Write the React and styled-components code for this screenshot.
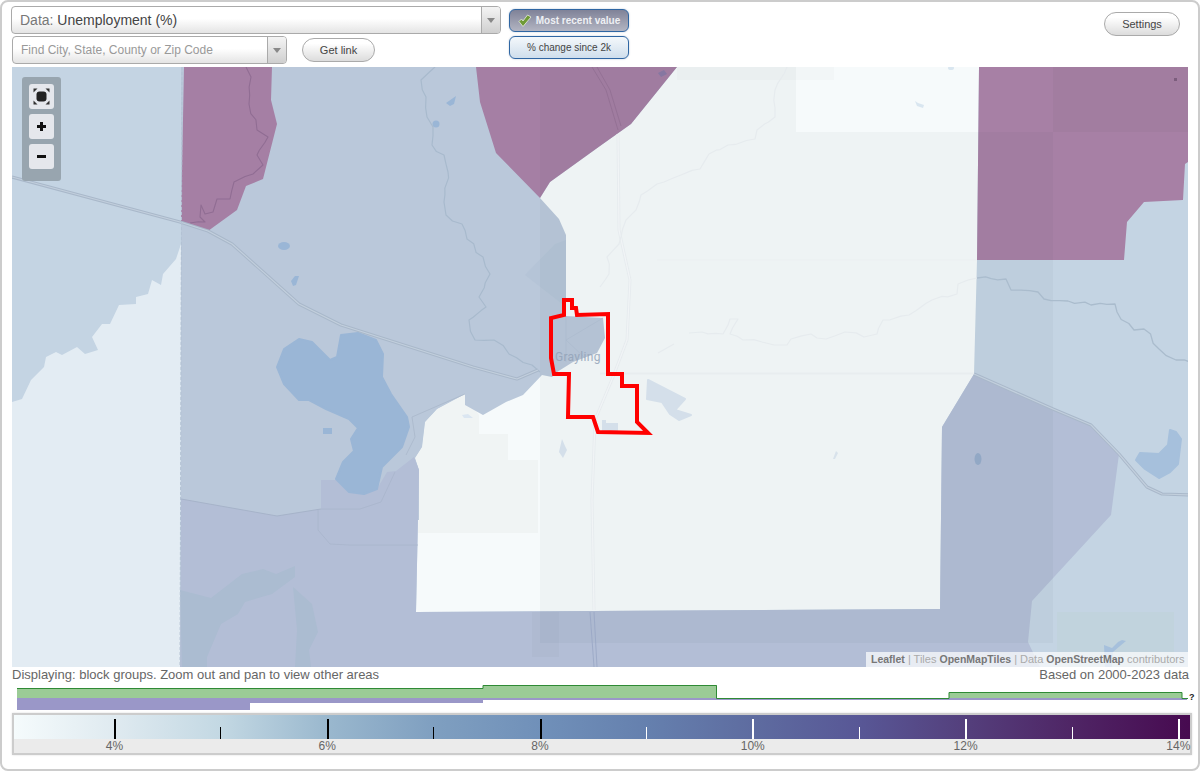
import React from 'react';
import styled, { createGlobalStyle } from 'styled-components';

const GlobalStyle = createGlobalStyle`
  html, body {
    margin: 0;
    padding: 0;
    background: #fff;
    font-family: "Liberation Sans", Arial, sans-serif;
  }
`;

const Page = styled.div`
  box-sizing: border-box;
  width: 1200px;
  height: 771px;
  overflow: hidden;
  background: #fff;
  border: 2px solid #ccc;
  border-radius: 8px;
  padding: 4px 9px 0 9px;
`;

const Toolbar = styled.div`
  display: flex;
  align-items: flex-start;
  height: 61px;
`;

const LeftStack = styled.div`
  display: flex;
  flex-direction: column;
  gap: 2px;
  width: 490px;
`;

const SelectBox = styled.div`
  box-sizing: border-box;
  display: flex;
  align-items: center;
  height: 28px;
  width: ${(p) => p.$width}px;
  margin-left: ${(p) => p.$indent || 0}px;
  border: 1px solid #aaa;
  border-radius: 4px;
  background: linear-gradient(#fff 45%, #e4e4e4);
`;

const SelectText = styled.div`
  flex: 1;
  padding-left: 8px;
  font-size: ${(p) => (p.$small ? 12 : 14)}px;
  color: ${(p) => (p.$small ? '#999' : '#777')};
`;

const SelectValue = styled.span`
  color: #444;
`;

const SelectArrow = styled.div`
  box-sizing: border-box;
  display: flex;
  align-items: center;
  justify-content: center;
  width: 19px;
  height: 100%;
  border-left: 1px solid #aaa;
  background: linear-gradient(#f4f4f4, #cfcfcf);
  border-radius: 0 3px 3px 0;
  &::after {
    content: '';
    border-left: 4px solid transparent;
    border-right: 4px solid transparent;
    border-top: 5px solid #888;
  }
`;

const FindRow = styled.div`
  display: flex;
  align-items: center;
  gap: 15px;
  width: 500px;
`;

const PillButton = styled.button`
  box-sizing: border-box;
  width: ${(p) => p.$width}px;
  height: 24px;
  padding: 0;
  border: 1px solid #aaa;
  border-radius: 12px;
  background: linear-gradient(#fff 20%, #dcdcdc);
  color: #444;
  font-family: inherit;
  font-size: 11px;
`;

const ToggleStack = styled.div`
  display: flex;
  flex-direction: column;
  gap: 4px;
  margin: 3px 0 0 8px;
`;

const Toggle = styled.div`
  box-sizing: border-box;
  display: flex;
  align-items: center;
  justify-content: center;
  gap: 4px;
  width: 120px;
  height: 23px;
  border: 1px solid #2f66a3;
  border-radius: 6px;
  box-shadow: 0 0 2px #b8c4d2;
  font-size: 10px;
  font-weight: ${(p) => (p.$active ? 700 : 400)};
  color: ${(p) => (p.$active ? '#eef0f4' : '#444')};
  background: ${(p) =>
    p.$active
      ? 'linear-gradient(#7f8298, #b3b5c2)'
      : 'linear-gradient(#f4f8fb, #cfdeec)'};
`;

const SettingsSlot = styled.div`
  margin-left: auto;
  margin-top: 6px;
  margin-right: 9px;
`;

const MapFrame = styled.div`
  position: relative;
  width: 1176px;
  height: 600px;
  margin-left: 1px;
  overflow: hidden;
  background: #c3d3e3;
`;

const MapDrawing = styled.svg`
  display: block;
  width: 1176px;
  height: 600px;
`;

const ZoomPanel = styled.div`
  position: absolute;
  top: 10px;
  left: 10px;
  display: flex;
  flex-direction: column;
  gap: 5px;
  box-sizing: border-box;
  width: 39px;
  height: 104px;
  padding: 7px;
  border-radius: 3px;
  background: #98a5af;
`;

const ZoomButton = styled.div`
  display: flex;
  align-items: center;
  justify-content: center;
  width: 25px;
  height: 25px;
  border-radius: 3px;
  background: #e5e7ec;
`;

const Attribution = styled.div`
  position: absolute;
  right: 0;
  bottom: 0;
  box-sizing: border-box;
  width: 322px;
  height: 15px;
  padding-left: 5px;
  background: rgba(255, 255, 255, 0.7);
  color: #aaa;
  font-size: 11px;
  line-height: 15px;
  white-space: nowrap;
`;

const AttrLink = styled.span`
  color: #777;
  font-size: 10.5px;
  font-weight: 700;
`;

const InfoRow = styled.div`
  display: flex;
  justify-content: space-between;
  width: 1177px;
  margin-left: 1px;
  height: 16px;
  font-size: 13px;
  line-height: 15px;
  color: #666;
`;

const Histogram = styled.svg`
  display: block;
  width: 1186px;
  height: 30px;
  margin: 0 0 0 1px;
`;

const Legend = styled.div`
  box-sizing: border-box;
  width: 1180px;
  height: 42px;
  margin-left: 1px;
  border: 2px solid #ccc;
  box-shadow: 0 0 2px #ddd;
  background: #ebebeb;
`;

const LegendBar = styled.div`
  box-sizing: border-box;
  display: grid;
  grid-template-columns: repeat(11, 106.4px);
  align-items: end;
  height: 24px;
  padding-left: 100px;
  background: linear-gradient(
    to right,
    #f5fbfc 0%,
    #dfeaf0 8.6%,
    #c3d8e3 17.6%,
    #9ab8ce 26.6%,
    #7f9fc0 35.7%,
    #7090b9 44.8%,
    #6580ae 53.8%,
    #5e6ca0 62.8%,
    #585796 71.9%,
    #543f7c 81%,
    #4f2565 90%,
    #470a50 100%
  );
`;

const Tick = styled.div`
  width: ${(p) => (p.$major ? 2 : 1)}px;
  height: ${(p) => (p.$major ? 20 : 12)}px;
  background: ${(p) => (p.$light ? '#fff' : '#000')};
`;

const LegendLabels = styled.div`
  display: flex;
  margin-left: -6px;
`;

const LegendLabel = styled.div`
  flex: none;
  width: 212.8px;
  text-align: center;
  font-size: 12px;
  line-height: 14px;
  color: #666;
`;

const toPoints = (pts) => pts.map((p) => p.join(',')).join(' ');
const toLine = (pts) => 'M' + pts.map((p) => p.join(' ')).join('L');

// little zigzag so the rivers do not look ruled
const wiggle = (pts, amp = 1.6) => {
  const out = [];
  pts.forEach((p, i) => {
    out.push(p);
    const next = pts[i + 1];
    if (!next) return;
    const steps = Math.max(1, Math.floor(Math.hypot(next[0] - p[0], next[1] - p[1]) / 7));
    for (let s = 1; s < steps; s++) {
      const t = s / steps;
      const off = Math.sin(s * 2.3 + i * 1.7) * amp;
      out.push([p[0] + (next[0] - p[0]) * t + off, p[1] + (next[1] - p[1]) * t - off]);
    }
  });
  return toLine(out);
};

const lightArea = [[181,244],[176,259],[163,274],[161,285],[152,280],[148,294],[136,297],[136,304],[119,305],[110,324],[102,324],[92,337],[98,350],[85,354],[77,347],[62,355],[56,352],[46,357],[44,367],[31,380],[22,399],[12,402],[12,667],[180,667]];
const midArea = [[181,67],[476,67],[540,198],[559,219],[566,235],[566,316],[603,318],[605,338],[597,353],[573,362],[557,372],[552,377],[542,375],[523,395],[506,402],[483,415],[465,405],[465,394],[437,409],[425,422],[422,447],[415,458],[419,470],[419,520],[181,520]];
const bottomArea = [[181,499],[277,516],[321,509],[321,480],[336,480],[349,492],[364,494],[377,489],[387,472],[396,471],[414,457],[419,470],[416,612],[940,609],[942,427],[974,374],[1053,409],[1091,425],[1119,454],[1111,515],[1032,601],[1028,642],[1040,667],[180,667]];
const centerArea = [[540,198],[550,182],[600,146],[631,124],[677,67],[979,67],[977,260],[974,374],[942,427],[940,609],[416,612],[419,470],[415,458],[422,447],[425,422],[437,409],[465,394],[540,300]];
const paleStairs = [[422,447],[425,422],[437,409],[465,394],[479,415],[479,434],[508,434],[508,460],[538,460],[538,533],[418,533],[419,470],[415,458]];
const purpleLeft = [[184,67],[272,67],[271,100],[277,124],[263,179],[246,186],[237,210],[208,231],[181,223]];
const purpleTop = [[476,67],[480,102],[496,153],[540,198],[550,182],[600,146],[631,124],[677,67]];
const purpleRight = [[979,67],[1188,67],[1188,162],[1185,164],[1183,200],[1144,202],[1127,222],[1124,260],[977,260]];
const lake = [[277,367],[284,349],[299,339],[312,342],[330,360],[337,357],[341,335],[358,333],[376,340],[383,354],[382,377],[391,394],[407,417],[409,427],[402,447],[382,467],[377,489],[364,494],[349,492],[336,479],[343,462],[354,451],[351,439],[358,428],[349,419],[326,409],[309,400],[299,400],[284,384]];
const greenPatchA = [[180,590],[211,598],[242,574],[263,569],[276,574],[295,566],[295,577],[272,594],[245,602],[238,614],[221,624],[207,657],[207,667],[182,667]];
const greenPatchB = [[293,587],[312,604],[318,632],[309,650],[311,667],[295,667],[297,630]];
const eastLake = [[1170,430],[1176,432],[1181,439],[1178,464],[1170,472],[1159,478],[1145,469],[1136,460],[1140,453],[1159,454],[1168,445]];
const paleLake = [[648,380],[685,399],[675,410],[691,415],[679,420],[670,414],[662,402],[647,399]];
const outline = [[569,300],[564,300],[564,315],[551,318],[551,358],[554,374],[569,374],[568,417],[593,417],[598,432],[648,433],[637,422],[637,386],[622,386],[622,374],[608,374],[608,314],[577,315],[576,308],[572,308],[572,300]];

const riverWest = [[435,67],[421,80],[426,97],[427,117],[433,127],[432,145],[444,155],[448,172],[444,202],[446,215],[462,224],[467,239],[483,257],[490,274],[479,297],[486,307],[469,320],[475,340],[494,340],[509,354],[532,365],[540,372]];
const riverPurple = [[246,67],[251,77],[249,104],[257,130],[268,137],[257,155],[263,165],[253,174],[234,182],[230,199],[217,199],[213,212],[205,214],[201,205],[200,217],[205,222],[190,223]];
const riverNorth = [[787,67],[775,90],[775,117],[757,130],[755,139],[728,145],[709,154],[700,169],[681,175],[657,184],[641,195],[636,210],[626,220],[619,244],[607,257],[609,274],[600,287]];
const riverEast = [[1190,362],[1176,360],[1159,349],[1144,329],[1134,330],[1117,312],[1115,304],[1091,305],[1068,301],[1044,299],[1038,292],[1011,290],[1006,279],[977,278],[958,284],[957,294],[932,300],[909,315],[883,320],[877,334],[864,337],[845,332],[826,339],[811,334],[791,339],[787,345],[774,345],[762,342],[743,340],[730,334],[738,319],[730,319],[723,334],[702,332],[689,333]];
const roadWest = [[12,177],[180,222],[208,231],[232,244],[299,304],[341,325],[473,367],[517,379],[538,370]];
const roadEast = [[974,374],[1053,409],[1091,425],[1119,454],[1147,487],[1162,494],[1190,495]];
const roadNorth = [[618,134],[619,230],[630,280],[627,340],[613,377],[595,420],[592,500],[594,610]];

const MapLayer = () => (
  <MapDrawing viewBox="12 67 1176 600">
    <rect x="12" y="67" width="1176" height="600" fill="#c4d4e3" />
    <polygon points={toPoints(lightArea)} fill="#e3ecf3" />
    <polygon points={toPoints(centerArea)} fill="#f6fafb" />
    <polygon points={toPoints(paleStairs)} fill="#f0f4f4" />
    <polygon points={toPoints(midArea)} fill="#bac8da" />
    <polygon points="525,275 555,244 566,240 566,307" fill="#b5c4d7" />
    <polygon points={toPoints(bottomArea)} fill="#b3bed6" />
    <polygon points={toPoints(greenPatchA)} fill="#abbcd1" />
    <polygon points={toPoints(greenPatchB)} fill="#abbcd1" />
    <polygon points={toPoints(purpleLeft)} fill="#a57fa4" />
    <polygon points={toPoints(purpleTop)} fill="#a57fa4" />
    <polygon points={toPoints(purpleRight)} fill="#a780a5" />
    <rect x="1057" y="612" width="117" height="55" fill="#c1d3dd" />
    <rect x="677" y="67" width="157" height="13" fill="#283232" opacity="0.02" />

    <g strokeWidth="2" strokeLinejoin="round">
      <polygon points={toPoints(lake)} fill="#9ab6d6" stroke="#9ab6d6" />
      <polygon points={toPoints(eastLake)} fill="#a6c0dc" stroke="#a6c0dc" />
      <polygon points={toPoints(paleLake)} fill="#dbe6f1" stroke="#dbe6f1" />
    </g>
    <polygon points="446,103 456,96 454,104 450,106" fill="#9ab6d6" />
    <circle cx="436" cy="124" r="3.5" fill="#9ab6d6" />
    <ellipse cx="284" cy="246" rx="6" ry="4" fill="#9ab6d6" />
    <polygon points="295,276 299,276 296,285 293,286 291,281" fill="#9ab6d6" />
    <rect x="323" y="428" width="9" height="6" fill="#9ab6d6" />
    <ellipse cx="978" cy="459" rx="3.5" ry="6" fill="#97adcb" />
    <polygon points="915,101 918,103 924,105 923,108 917,106" fill="#d9e6f0" />
    <ellipse cx="951" cy="68" rx="3" ry="2" fill="#d9e6f0" />
    <polygon points="836,451 838,453 835,459 833,459" fill="#dfe9f2" />
    <polygon points="562,439 565,446 567,450 563,458 559,452" fill="#dbe6f1" />
    <polygon points="602,420 606,420 606,423 618,423 618,432 602,432" fill="#dbe6f1" />
    <polygon points="462,415 468,414 473,418 464,418" fill="#dbe6f1" />
    <polygon points="1104,645 1112,648 1118,642 1122,640 1126,641 1120,646 1113,652 1112,667 1105,667" fill="#a6c0dc" />
    <polygon points="658,73 664,70 667,74 661,77" fill="#8a7aa5" />
    <rect x="1174" y="78" width="3" height="3" fill="#7f5f80" />

    <rect x="540" y="67" width="256" height="65" fill="#283232" opacity="0.035" />
    <rect x="540" y="132" width="513" height="511" fill="#283232" opacity="0.035" />
    <rect x="1053" y="67" width="135" height="65" fill="#283232" opacity="0.04" />
    <rect x="532" y="612" width="27" height="45" fill="#283232" opacity="0.025" />

    <g fill="none" strokeLinejoin="round">
      <path d={toLine(roadNorth)} stroke="#e6ebee" strokeWidth="3" />
      <path d={toLine(roadNorth)} stroke="#f1f4f6" strokeWidth="1.2" />
      <path d="M590 612L594 667M594 612L597 667" stroke="#98a6c4" strokeWidth="0.8" />
      <path d="M592 67L606 90L618 130" stroke="#916f92" strokeWidth="0.8" />
      <path d="M597 67L610 90L621 126" stroke="#916f92" strokeWidth="0.8" />
      <path d="M600 373.500L974 373.500" stroke="#e8edef" strokeWidth="2" />
      <path d="M657 260L977 260" stroke="#ebeff1" strokeWidth="1" />
      <path d={wiggle(riverNorth)} stroke="#e6ebee" strokeWidth="1.2" />
      <path d={wiggle(riverEast.slice(13))} stroke="#e6ebee" strokeWidth="1.2" />
      <path d={wiggle(riverEast.slice(0, 14))} stroke="#aabccd" strokeWidth="1.3" />
      <path d={wiggle(riverWest)} stroke="#a8bacd" strokeWidth="1.2" />
      <path d={wiggle(riverPurple)} stroke="#906d93" strokeWidth="1.1" />
      <path d="M674 344L658 353" stroke="#e6ebee" strokeWidth="1.2" />
      <path d={toLine(roadWest)} stroke="#a9b8ca" strokeWidth="3.2" />
      <path d={toLine(roadWest)} stroke="#c2cfdd" strokeWidth="1.2" />
      <path d={toLine(roadEast)} stroke="#a9b8ca" strokeWidth="3.2" />
      <path d={toLine(roadEast)} stroke="#c2cfdd" strokeWidth="1.2" />
      <path d="M182 67L180 667" stroke="#b3c2d4" strokeWidth="1" strokeDasharray="3 2" />
      <path d="M181 499L277 516L321 509" stroke="#a6b3c9" strokeWidth="1" />
      <path d="M318 510L318 530L330 544L349 545L418 545" stroke="#a8b5cc" strokeWidth="0.8" />
      <path d="M321 509L360 509L381 502L395 472" stroke="#a8b5cc" strokeWidth="0.8" />
      <path d="M412 417L415 437L406 455M412 417L465 394" stroke="#aab8ca" strokeWidth="0.8" />
      <path d="M566 316L566 362M566 340L603 318M566 340L585 358" stroke="#acbbce" strokeWidth="0.8" />
    </g>

    <text x="555" y="361" fontFamily="Roboto, sans-serif" fontSize="12" letterSpacing="0.3" fill="#93a3b8" opacity="0.85">Grayling</text>

    <polygon points={toPoints(outline)} fill="none" stroke="#ff0000" strokeWidth="4" strokeLinejoin="miter" />
  </MapDrawing>
);

const FitIcon = () => (
  <svg width="17" height="17" viewBox="0 0 17 17">
    <rect x="3.500" y="3.500" width="10" height="10" rx="3" fill="#222" />
    <path d="M0.500 0.500h4L0.500 4.500zM16.500 0.500h-4L16.500 4.500zM0.500 16.500h4L0.500 12.500zM16.500 16.500h-4L16.500 12.500z" fill="#333" />
  </svg>
);

const PlusIcon = () => (
  <svg width="11" height="11" viewBox="0 0 11 11">
    <path d="M4 1h3v3h3v3H7v3H4V7H1V4h3z" fill="#111" />
  </svg>
);

const MinusIcon = () => (
  <svg width="11" height="11" viewBox="0 0 11 11">
    <rect x="1" y="4" width="9" height="3" fill="#111" />
  </svg>
);

const CheckIcon = () => (
  <svg width="14" height="14" viewBox="0 0 14 14">
    <path d="M1 7.500L5 12.500 13 3 9.500 1 5 7 3.500 5z" fill="#6f9a36" stroke="#e8eee0" strokeWidth="0.8" strokeLinejoin="round" />
  </svg>
);

const HistogramChart = () => (
  <Histogram viewBox="12 683 1186 30">
    <rect x="17" y="698" width="1170" height="2" fill="#9a97c8" />
    <rect x="17" y="700" width="466" height="3" fill="#9a97c8" />
    <rect x="17" y="703" width="233" height="7" fill="#9a97c8" />
    <path d="M17 698V688H483V685H717V698H949V692H1182V698H1188" fill="#9bcb96" />
    <path d="M17 688.500H483V685.500H716.500V698.500H949V692.500H1182V698.500H1188" fill="none" stroke="#2f8a35" strokeWidth="1" />
    <rect x="717" y="699" width="232" height="1" fill="#9a97c8" />
    <text x="1189" y="700" fontSize="9" fontWeight="700" fontFamily="Liberation Sans, sans-serif" fill="#222">?</text>
  </Histogram>
);

const ticks = [
  { major: true },
  {},
  { major: true },
  {},
  { major: true },
  { light: true },
  { major: true, light: true },
  { light: true },
  { major: true, light: true },
  { light: true },
  { major: true, light: true },
];

const labels = ['4%', '6%', '8%', '10%', '12%', '14%'];

const App = () => {
  return (
    <Page>
      <GlobalStyle />
      <Toolbar>
        <LeftStack>
          <SelectBox $width={490}>
            <SelectText>
              Data: <SelectValue>Unemployment (%)</SelectValue>
            </SelectText>
            <SelectArrow />
          </SelectBox>
          <FindRow>
            <SelectBox $width={275} $indent={1}>
              <SelectText $small>Find City, State, County or Zip Code</SelectText>
              <SelectArrow />
            </SelectBox>
            <PillButton $width={73}>Get link</PillButton>
          </FindRow>
        </LeftStack>
        <ToggleStack>
          <Toggle $active>
            <CheckIcon />
            Most recent value
          </Toggle>
          <Toggle>% change since 2k</Toggle>
        </ToggleStack>
        <SettingsSlot>
          <PillButton $width={76}>Settings</PillButton>
        </SettingsSlot>
      </Toolbar>
      <MapFrame>
        <MapLayer />
        <ZoomPanel>
          <ZoomButton>
            <FitIcon />
          </ZoomButton>
          <ZoomButton>
            <PlusIcon />
          </ZoomButton>
          <ZoomButton>
            <MinusIcon />
          </ZoomButton>
        </ZoomPanel>
        <Attribution>
          <AttrLink>Leaflet</AttrLink> | Tiles <AttrLink>OpenMapTiles</AttrLink> | Data{' '}
          <AttrLink>OpenStreetMap</AttrLink> contributors
        </Attribution>
      </MapFrame>
      <InfoRow>
        <span>Displaying: block groups. Zoom out and pan to view other areas</span>
        <span>Based on 2000-2023 data</span>
      </InfoRow>
      <HistogramChart />
      <Legend>
        <LegendBar>
          {ticks.map((t, i) => (
            <Tick key={i} $major={t.major} $light={t.light} />
          ))}
        </LegendBar>
        <LegendLabels>
          {labels.map((l) => (
            <LegendLabel key={l}>{l}</LegendLabel>
          ))}
        </LegendLabels>
      </Legend>
    </Page>
  );
};

export default App;
